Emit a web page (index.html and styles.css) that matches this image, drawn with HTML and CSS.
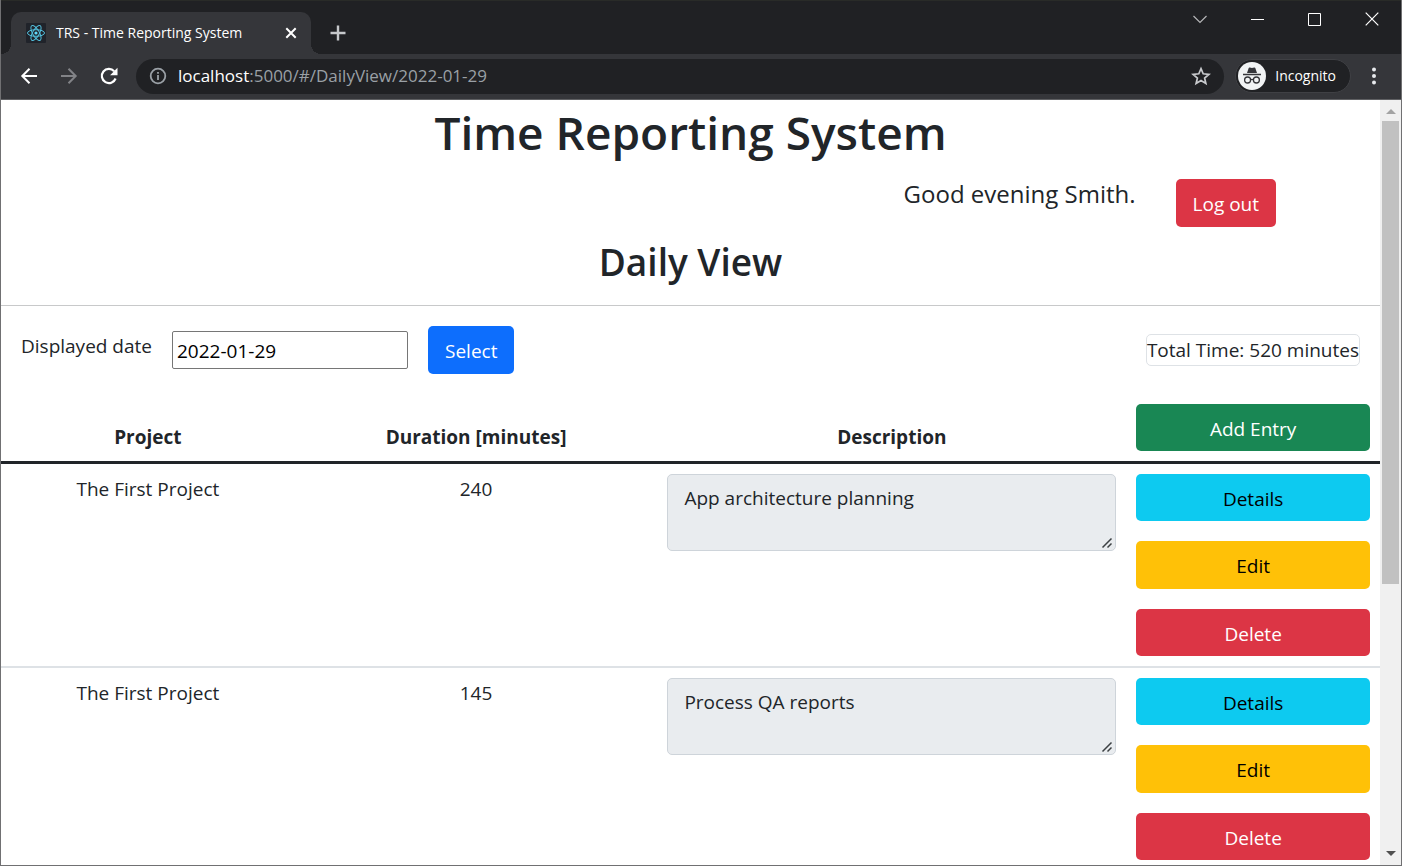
FILE: index.html
```html
<!DOCTYPE html>
<html lang="en">
<head>
<meta charset="utf-8">
<title>TRS - Time Reporting System</title>
<link rel="stylesheet" href="styles.css">
</head>
<body>
<div class="window">
  <header class="titlebar">
    <div class="tab">
      <svg class="favicon" width="20" height="20" viewBox="0 0 20 20" fill="none" stroke="#53c1de">
        <rect width="20" height="20" rx="1" fill="#20232a" stroke="none"/>
        <ellipse cx="10" cy="10" rx="8.5" ry="3.3"/>
        <ellipse cx="10" cy="10" rx="8.5" ry="3.3" transform="rotate(60 10 10)"/>
        <ellipse cx="10" cy="10" rx="8.5" ry="3.3" transform="rotate(120 10 10)"/>
        <circle cx="10" cy="10" r="1.6" fill="#61dafb" stroke="none"/>
      </svg>
      <span class="tab-title">TRS - Time Reporting System</span>
      <button class="icon-button" aria-label="Close tab">
        <svg width="12" height="12" viewBox="0 0 12 12" stroke="#fff" stroke-width="2"><path d="M1.3 1.3l9.4 9.4M10.7 1.3l-9.4 9.4"/></svg>
      </button>
    </div>
    <button class="icon-button new-tab" aria-label="New tab">
      <svg width="16" height="16" viewBox="0 0 16 16" stroke="#c6c8cb" stroke-width="2.400"><path d="M8 .5v15M.5 8h15"/></svg>
    </button>
    <div class="window-buttons">
      <button class="icon-button" aria-label="Search tabs">
        <svg width="14" height="14" viewBox="0 0 14 14" fill="none" stroke="#b5b6b8" stroke-width="1.2"><path d="M.5 4l6.500 6.500L13.500 4"/></svg>
      </button>
      <button class="icon-button" aria-label="Minimize">
        <svg width="13" height="13" viewBox="0 0 13 13" stroke="#fff"><path d="M0 6.500h13"/></svg>
      </button>
      <button class="icon-button" aria-label="Maximize">
        <svg width="13" height="13" viewBox="0 0 13 13" fill="none" stroke="#fff"><path d="M.5.5h12v12H.5z"/></svg>
      </button>
      <button class="icon-button" aria-label="Close window">
        <svg width="14" height="14" viewBox="0 0 14 14" stroke="#fff" stroke-width="1.2"><path d="M.7.700l12.600 12.600M13.300.7L.7 13.300"/></svg>
      </button>
    </div>
  </header>

  <nav class="toolbar">
    <button class="icon-button" aria-label="Back">
      <svg width="18" height="18" viewBox="0 0 18 18" fill="none" stroke="#fff" stroke-width="2"><path d="M17 9H2.500M9.500 1.800L2.300 9l7.200 7.200"/></svg>
    </button>
    <button class="icon-button" aria-label="Forward">
      <svg width="18" height="18" viewBox="0 0 18 18" fill="none" stroke="#828387" stroke-width="2"><path d="M1 9h14.500M8.500 1.800L15.700 9l-7.200 7.200"/></svg>
    </button>
    <button class="icon-button" aria-label="Reload">
      <svg width="18" height="18" viewBox="0 0 18 18" fill="none" stroke="#fff" stroke-width="2.200"><path d="M15.600 11.500A7.100 7.100 0 1 1 14.200 4.200"/><path d="M17.500.8v7.400h-7.400z" fill="#fff" stroke="none"/></svg>
    </button>
    <div class="address">
      <svg width="18" height="18" viewBox="0 0 18 18" fill="none" stroke="#9aa0a6" stroke-width="1.800"><circle cx="9" cy="9" r="7.300"/><path d="M9 8v5M9 5v1.800"/></svg>
      <span class="url"><span class="host">localhost</span>:5000/#/DailyView/2022-01-29</span>
      <button class="icon-button" aria-label="Bookmark this page">
        <svg width="20" height="20" viewBox="0 0 20 20" fill="none" stroke="#c8cacd" stroke-width="1.700"><path d="M10 2.600l2.200 5.200 5.700.5-4.300 3.700 1.300 5.500-4.900-2.900-4.900 2.900 1.300-5.500L2.100 8.300l5.700-.5z"/></svg>
      </button>
    </div>
    <button class="incognito">
      <svg width="28" height="28" viewBox="0 0 28 28" fill="none" stroke="#35363a">
        <circle cx="14" cy="14" r="14" fill="#f1f3f4" stroke="none"/>
        <path d="M9 11l1.700-5q.3-.8 1.200-.5l2.100.6 2.100-.6q.9-.3 1.200.5L19 11z" fill="#35363a" stroke="none"/>
        <path d="M5 12.500h18" stroke-width="1.500"/>
        <circle cx="9.600" cy="18" r="3" stroke-width="1.300"/><circle cx="18.400" cy="18" r="3" stroke-width="1.300"/>
        <path d="M12.600 17.700q1.400-.8 2.800 0" stroke-width="1.300"/>
      </svg>
      <span>Incognito</span>
    </button>
    <button class="icon-button menu" aria-label="Menu">
      <svg width="6" height="18" viewBox="0 0 6 18" fill="#e8eaed"><circle cx="3" cy="2.500" r="2"/><circle cx="3" cy="9" r="2"/><circle cx="3" cy="15.500" r="2"/></svg>
    </button>
  </nav>

  <div class="viewport">
    <main class="page">
      <h1>Time Reporting System</h1>
      <div class="account">
        <p class="greeting">Good evening Smith.</p>
        <button class="btn danger">Log out</button>
      </div>
      <h2>Daily View</h2>
      <form class="filters" onsubmit="return false">
        <label for="date">Displayed date</label>
        <input id="date" class="date" type="text" value="2022-01-29">
        <button class="btn primary">Select</button>
        <span class="total">Total Time: 520 minutes</span>
      </form>
      <table class="entries">
        <colgroup><col class="col-project"><col class="col-duration"><col class="col-description"><col class="col-actions"></colgroup>
        <thead>
          <tr>
            <th scope="col">Project</th>
            <th scope="col">Duration [minutes]</th>
            <th scope="col">Description</th>
            <td><button class="btn success">Add Entry</button></td>
          </tr>
        </thead>
        <tbody>
          <tr>
            <td>The First Project</td>
            <td>240</td>
            <td>
              <div class="description-box">
                <textarea class="description" aria-label="Description" disabled>App architecture planning</textarea>
                <svg class="grip" width="12" height="12" viewBox="0 0 12 12" stroke="#3c4043" stroke-width="1.500"><path d="M1.500 10.500l9-9M6.500 10.500l4-4"/></svg>
              </div>
            </td>
            <td><div class="actions"><button class="btn info">Details</button><button class="btn warning">Edit</button><button class="btn danger">Delete</button></div></td>
          </tr>
          <tr>
            <td>The First Project</td>
            <td>145</td>
            <td>
              <div class="description-box">
                <textarea class="description" aria-label="Description" disabled>Process QA reports</textarea>
                <svg class="grip" width="12" height="12" viewBox="0 0 12 12" stroke="#3c4043" stroke-width="1.500"><path d="M1.500 10.500l9-9M6.500 10.500l4-4"/></svg>
              </div>
            </td>
            <td><div class="actions"><button class="btn info">Details</button><button class="btn warning">Edit</button><button class="btn danger">Delete</button></div></td>
          </tr>
        </tbody>
      </table>
    </main>
    <div class="scrollbar" aria-hidden="true">
      <svg width="10" height="5" viewBox="0 0 10 5" fill="#a3a3a3"><path d="M0 5l5-5 5 5z"/></svg>
      <div class="track"><div class="thumb"></div></div>
      <svg width="10" height="5" viewBox="0 0 10 5" fill="#505050"><path d="M0 0l5 5 5-5z"/></svg>
    </div>
  </div>
</div>
</body>
</html>
```
FILE: styles.css
```css
* {
  box-sizing: border-box;
}

body {
  margin: 0;
  font-family: "Open Sans", "Noto Sans", sans-serif;
  font-size: 19px;
  line-height: 30px;
  color: #212529;
}

button,
input,
textarea {
  font: inherit;
}

svg {
  display: block;
  flex: none;
}

.window {
  display: flex;
  flex-direction: column;
  height: 100vh;
  overflow: hidden;
  border: 1px solid #707072;
  border-top: 0;
  background: #fff;
}

.icon-button {
  display: flex;
  padding: 0;
  border: 0;
  background: none;
}

/* Browser chrome */

.titlebar {
  display: flex;
  flex: none;
  height: 54px;
  padding: 11px 22px 0 10px;
  border-top: 1px solid #292b28;
  background: #202124;
}

.tab {
  position: relative;
  display: flex;
  align-items: center;
  gap: 10px;
  width: 300px;
  height: 42px;
  padding: 0 14px 0 15px;
  border-radius: 10px 10px 0 0;
  background: #35363a;
  color: #fff;
  font-size: 14px;
}

.tab::before,
.tab::after {
  content: "";
  position: absolute;
  bottom: 0;
  width: 10px;
  height: 10px;
}

.tab::before {
  left: -10px;
  background: radial-gradient(circle at 0 0, transparent 10px, #35363a 10px);
}

.tab::after {
  right: -10px;
  background: radial-gradient(circle at 100% 0, transparent 10px, #35363a 10px);
}

.tab-title {
  flex: 1;
  white-space: nowrap;
}

.new-tab {
  align-self: center;
  margin-left: 19px;
}

.window-buttons {
  display: flex;
  align-items: center;
  gap: 44px;
  height: 14px;
  margin-left: auto;
}

.toolbar {
  display: flex;
  flex: none;
  align-items: center;
  gap: 22px;
  height: 46px;
  padding: 0 24px 1px 19px;
  border-bottom: 1px solid #5f6063;
  background: #35363a;
}

.address {
  display: flex;
  flex: 1;
  align-items: center;
  gap: 11px;
  height: 35px;
  margin-left: -4px;
  padding: 0 13px;
  border-radius: 18px;
  background: #202124;
}

.url {
  flex: 1;
  color: #9aa0a6;
  font-size: 17px;
}

.host {
  color: #fff;
}

.incognito {
  display: flex;
  align-items: center;
  gap: 9px;
  height: 34px;
  margin-left: -11px;
  padding: 0 14px 0 2px;
  border: 1px solid #3f4044;
  border-radius: 17px;
  background: #202124;
  color: #fff;
  font-size: 14px;
}

.menu {
  margin-left: -2px;
}

.viewport {
  display: flex;
  flex: 1;
  min-height: 0;
}

.scrollbar {
  display: flex;
  flex: none;
  flex-direction: column;
  align-items: center;
  gap: 7px;
  width: 21px;
  padding: 9px 2px;
  background: #f0f0f0;
}

.track {
  flex: 1;
  width: 100%;
}

.thumb {
  height: 64%;
  background: #c1c1c1;
}

/* Page */

.page {
  flex: 1;
  min-width: 0;
  overflow: hidden;
}

h1,
h2 {
  margin: 0;
  font-weight: 600;
  text-align: center;
}

h1 {
  font-size: 46px;
  line-height: 64px;
}

h2 {
  padding: 9px 0 17px;
  border-bottom: 1px solid #c8c9ca;
  font-size: 37px;
  line-height: 52px;
}

.btn {
  display: block;
  height: 48px;
  padding: 2px 17px 0;
  border: 0;
  border-radius: 5px;
  color: #fff;
}

.primary { background: #0d6efd; }
.success { background: #198754; }
.danger { background: #dc3545; }
.info { background: #0dcaf0; color: #000; }
.warning { background: #ffc107; color: #000; }

.account {
  display: flex;
  justify-content: flex-end;
  gap: 40px;
  padding: 15px 104px 0 0;
}

.greeting {
  margin: 0;
  font-size: 24px;
}

.filters {
  display: flex;
  align-items: center;
  gap: 20px;
  padding: 20px;
}

.filters label {
  padding-bottom: 9px;
}

.date {
  width: 236px;
  height: 38px;
  padding: 2px 4px 0;
  border: 1px solid #767676;
  border-radius: 2px;
  color: #000;
}

.total {
  margin-left: auto;
  border: 1px solid #dee2e6;
  border-radius: 5px;
}

.entries {
  width: 100%;
  border-collapse: separate;
  border-spacing: 0;
  table-layout: fixed;
  text-align: center;
}

.col-project { width: 21.3%; }
.col-duration { width: 26.3%; }
.col-description { width: 34%; }
.col-actions { width: 18.4%; }

.entries th,
.entries td {
  padding: 10px;
  vertical-align: top;
}

.entries thead th {
  padding-bottom: 9px;
  vertical-align: bottom;
}

.entries thead th,
.entries thead td {
  border-bottom: 3px solid #212529;
}

.entries tbody td {
  border-bottom: 2px solid #dee2e6;
}

.entries .btn {
  width: 100%;
  height: 47px;
}

.actions {
  display: grid;
  gap: 20px;
}

.entries .actions .warning {
  height: 48px;
}

.description-box {
  position: relative;
}

.description {
  display: block;
  width: 100%;
  height: 77px;
  padding: 8px 16px;
  border: 1px solid #ced4da;
  border-radius: 5px;
  background: #e9ecef;
  color: #212529;
  resize: none;
}

.grip {
  position: absolute;
  right: 3px;
  bottom: 2px;
}
```
